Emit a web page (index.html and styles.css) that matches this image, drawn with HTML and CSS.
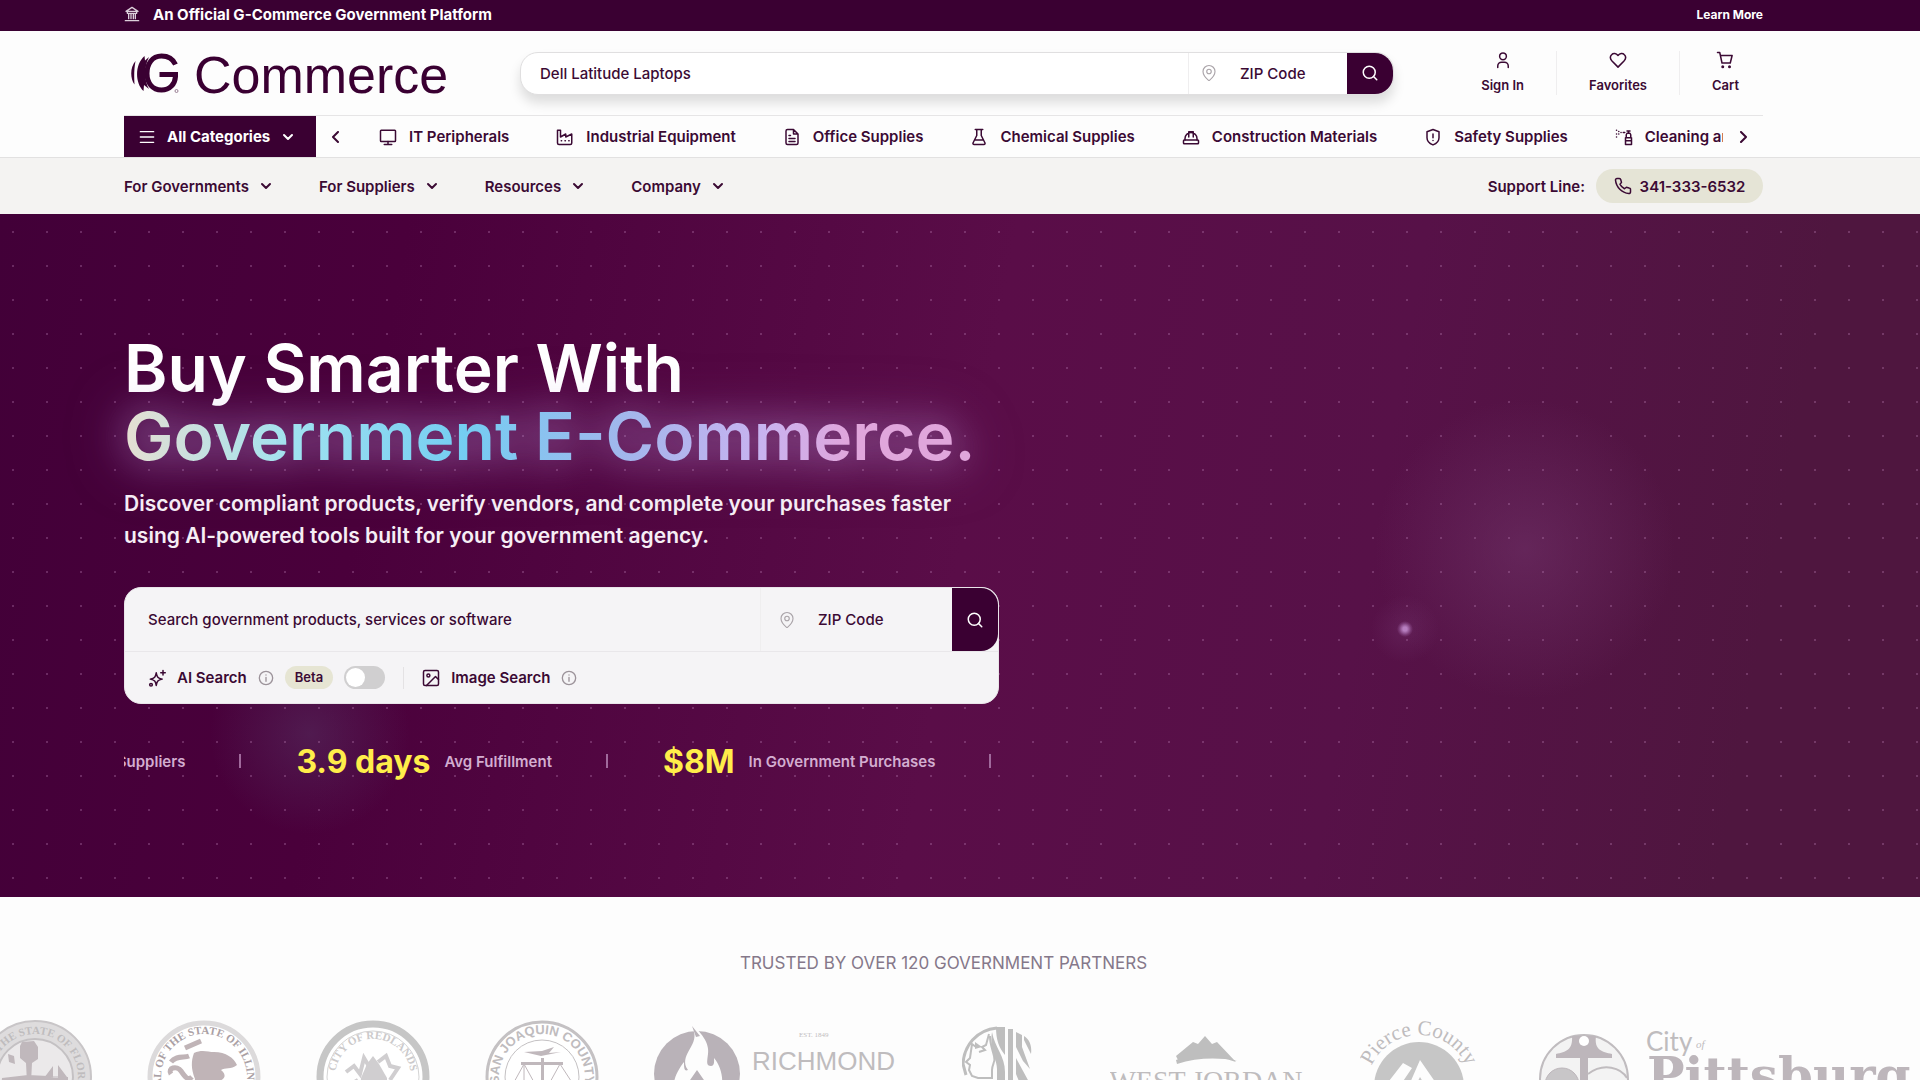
FILE: index.html
```html
<!DOCTYPE html>
<html lang="en">
<head>
<meta charset="utf-8">
<meta name="viewport" content="width=device-width, initial-scale=1">
<title>G Commerce</title>
<link rel="stylesheet" href="styles.css">
</head>
<body>
<svg class="sprite" aria-hidden="true">
  <symbol id="chevron-down" viewBox="0 0 12 12"><path d="M2 4l4 4 4-4"/></symbol>
  <symbol id="pin" viewBox="0 0 24 24"><path d="M20 10c0 5-5.500 10.200-7.400 11.800a1 1 0 0 1-1.200 0C9.500 20.200 4 15 4 10a8 8 0 0 1 16 0"/><circle cx="12" cy="10" r="3"/></symbol>
  <symbol id="search" viewBox="0 0 24 24"><circle cx="11" cy="11" r="8"/><path d="M21 21l-4.300-4.300"/></symbol>
  <symbol id="info" viewBox="0 0 24 24"><circle cx="12" cy="12" r="10"/><path d="M12 11v6M12 7.500h.010"/></symbol>
</svg>

<div class="topbar">
  <p class="official">
    <svg class="icon" viewBox="0 0 24 24"><path d="M3 8l9-6 9 6zM5 8v3h14V8M7 12v7M10.500 12v7M14 12v7M17 12v7M2 22h20"/></svg>
    An Official G-Commerce Government Platform
  </p>
  <a class="learn" href="#">Learn More</a>
</div>

<header class="header">
  <a class="logo" href="#" aria-label="G Commerce home">
    <svg class="logo-mark" viewBox="0 0 48 42">
      <path d="M44.500 12.500C42 7 36.500 4 30.500 4C21 4 16 12 16 21.500s5.500 16.500 14.500 16.500c8.500 0 13.500-6 14-13.500v-2H28.500" fill="none" stroke="currentColor" stroke-width="5"/>
      <path d="M18 5L14 8.500l-.500-4.500C4 12 3.500 31 12.500 39l.500-6 5 4C13 29 13 14 18 5zM4.500 9C-1 15-1 27 3.500 32.500C3 25 3 17 4.500 9z" fill="currentColor"/>
      <circle cx="45.500" cy="39" r="1.500" fill="none" stroke="#9a7f94"/>
    </svg>
    <span>Commerce</span>
  </a>
  <form class="search" role="search">
    <input class="search-query" type="text" placeholder="Dell Latitude Laptops" aria-label="Search products">
    <label class="zip"><svg class="icon"><use href="#pin"/></svg><input type="text" placeholder="ZIP Code" aria-label="ZIP Code"></label>
    <button class="search-go" type="button" aria-label="Search"><svg class="icon"><use href="#search"/></svg></button>
  </form>
  <nav class="account" aria-label="Account">
    <a href="#"><svg class="icon" viewBox="0 0 24 24"><circle cx="12" cy="7" r="4.500"/><path d="M5 22v-2a5 5 0 0 1 5-5h4a5 5 0 0 1 5 5v2"/></svg>Sign In</a>
    <a href="#"><svg class="icon" viewBox="0 0 24 24"><path d="M12 21.500l-8-8.200C1.500 10.500 1.500 7 3.500 5c2.300-2.500 6-2 8.500 1 2.500-3 6.200-3.500 8.500-1 2 2 2 5.500-.500 8.300z"/></svg>Favorites</a>
    <a href="#"><svg class="icon" viewBox="0 0 24 24"><path d="M2 2h3l3 14h11l2.500-10H6"/><circle cx="9" cy="21" r="1"/><circle cx="18" cy="21" r="1"/></svg>Cart</a>
  </nav>
</header>

<div class="categories">
  <button class="all-categories" type="button">
    <svg class="icon" viewBox="0 0 24 24"><path d="M2 4h20M2 12h20M2 20h20"/></svg>
    All Categories
    <svg class="chevron"><use href="#chevron-down"/></svg>
  </button>
  <button class="scroll" type="button" aria-label="Previous categories"><svg class="chevron" viewBox="0 0 12 12"><path d="M8 1L3 6l5 5"/></svg></button>
  <nav class="category-list" aria-label="Categories">
    <a href="#"><svg class="icon" viewBox="0 0 24 24"><rect x="2" y="3" width="20" height="15" rx="1"/><path d="M12 18v4M7 22h10"/></svg>IT Peripherals</a>
    <a href="#"><svg class="icon" viewBox="0 0 24 24"><path d="M2 20V3h4v9l7-4v4l8-4v12a2 2 0 0 1-2 2H4a2 2 0 0 1-2-2zM7 17h.500M12 17h.500M17 17h.500"/></svg>Industrial Equipment</a>
    <a href="#"><svg class="icon" viewBox="0 0 24 24"><path d="M14 2H6a2 2 0 0 0-2 2v16a2 2 0 0 0 2 2h12a2 2 0 0 0 2-2V8zM14 2v6h6M8 10h2M8 14h8M8 18h8"/></svg>Office Supplies</a>
    <a href="#"><svg class="icon" viewBox="0 0 24 24"><path d="M7 2h10M9 2v8L4 20a1.500 1.500 0 0 0 1.400 2h13.200A1.500 1.500 0 0 0 20 20l-5-10V2M6.500 16h11"/></svg>Chemical Supplies</a>
    <a href="#"><svg class="icon" viewBox="0 0 24 24"><rect x="2" y="16" width="20" height="5" rx="1"/><path d="M4 16v-2a8 8 0 0 1 16 0v2M9 12V5h6v7"/></svg>Construction Materials</a>
    <a href="#"><svg class="icon" viewBox="0 0 24 24"><path d="M12 2l8 3v8c0 5-4 8-8 9.500C8 21 4 18 4 13V5zM12 8v5M12 16.500v.100"/></svg>Safety Supplies</a>
    <a href="#"><svg class="icon" viewBox="0 0 24 24"><path d="M14 13h8v9h-8zM15 13V9l1-2h4l1 2v4M18 7V4M16 4h4M14 17h8M2 3h.100M5 4.500h.100M8 6h.100M2 8h.100M5 8h.100M2 12h.100M11 6h2"/></svg>Cleaning and Janitorial</a>
  </nav>
  <button class="scroll" type="button" aria-label="More categories"><svg class="chevron" viewBox="0 0 12 12"><path d="M4 1l5 5-5 5"/></svg></button>
</div>

<div class="subnav">
  <nav class="menus" aria-label="Main">
    <a href="#">For Governments <svg class="chevron"><use href="#chevron-down"/></svg></a>
    <a href="#">For Suppliers <svg class="chevron"><use href="#chevron-down"/></svg></a>
    <a href="#">Resources <svg class="chevron"><use href="#chevron-down"/></svg></a>
    <a href="#">Company <svg class="chevron"><use href="#chevron-down"/></svg></a>
  </nav>
  <span>Support Line:</span>
  <a class="phone" href="tel:3413336532"><svg class="icon" viewBox="0 0 24 24"><path d="M22 17v3a2 2 0 0 1-2.200 2A19.800 19.800 0 0 1 2 4.200 2 2 0 0 1 4 2h3a2 2 0 0 1 2 1.700l1 3.500-2 2.500a16 16 0 0 0 6 6l2.500-2 3.500 1A2 2 0 0 1 22 17z"/></svg>341-333-6532</a>
</div>

<main>
  <section class="hero">
    <h1>Buy Smarter With<br><span class="accent">Government E-Commerce.</span></h1>
    <p class="lead">Discover compliant products, verify vendors, and complete your purchases faster using AI-powered tools built for your government agency.</p>
    <form class="finder">
      <div class="finder-row">
        <input class="search-query" type="text" placeholder="Search government products, services or software" aria-label="Search government products">
        <label class="zip"><svg class="icon"><use href="#pin"/></svg><input type="text" placeholder="ZIP Code" aria-label="ZIP Code"></label>
        <button class="search-go" type="button" aria-label="Search"><svg class="icon"><use href="#search"/></svg></button>
      </div>
      <div class="finder-options">
        <svg class="icon" viewBox="0 0 24 24"><path d="M11 5c1 6 2 7 8 8.500-6 1.500-7 2.500-8 8.500-1-6-2-7-8-8.500C9 12 10 11 11 5zM20 2v6M17 5h6"/><circle cx="4" cy="21" r="1.800"/></svg>
        <label for="ai">AI Search</label>
        <svg class="icon info"><use href="#info"/></svg>
        <span class="beta">Beta</span>
        <input class="toggle" id="ai" type="checkbox">
        <span class="rule"></span>
        <svg class="icon" viewBox="0 0 24 24"><rect x="2" y="2" width="20" height="20" rx="2"/><circle cx="8.500" cy="8.500" r="2"/><path d="M22 14l-4-4L6 22"/></svg>
        <a href="#">Image Search</a>
        <svg class="icon info"><use href="#info"/></svg>
      </div>
    </form>
    <div class="stats">
      <div class="stats-track">
        <p>Verified Suppliers</p>
        <p><strong>3.9 days</strong>Avg Fulfillment</p>
        <p><strong>$8M</strong>In Government Purchases</p>
        <p></p>
      </div>
    </div>
  </section>

  <section class="partners">
    <h2>TRUSTED BY OVER 120 GOVERNMENT PARTNERS</h2>
    <div class="partner-track">
      <svg class="seal" viewBox="0 0 114 114">
        <circle cx="57" cy="57" r="56" fill="#dedcdd" stroke="#c8c5c7" stroke-width="2"/><circle cx="57" cy="57" r="38" fill="#ebe9ea" stroke="#c4c1c3" stroke-width="2"/>
        <path id="ring" d="M57 100a43 43 0 0 1 0-86a43 43 0 0 1 0 86" fill="none"/>
        <text class="seal-serif"><textPath href="#ring" startOffset="50%">SEAL OF THE STATE OF FLORIDA</textPath></text>
        <path d="M44 22l12-1 4 6v12l-6 4-1 20h-4l-1-20-6-5V26zM24 58l26-3 40 2v20H22zM30 34l6 2 1 8-6-2zM66 58l9-12v12h5V45l9 12z" fill="#c0b8bc"/>
      </svg>
      <svg class="seal" viewBox="0 0 114 114">
        <circle cx="57" cy="57" r="54" fill="#fff" stroke="#dcdadb" stroke-width="5"/>
        <text class="seal-serif dark"><textPath href="#ring" startOffset="50%">SEAL OF THE STATE OF ILLINOIS</textPath></text>
        <path d="M47 33c8-4 14-1 20-1 12 0 20 6 23 13-6 5-12 2-16 5 6 5 4 9-2 11-5 1-8 8-12 14-6 4-12 2-14-4l2-12c-4-10-4-18-1-26z" fill="#c0b4b7"/>
        <path d="M38 28l16-7M24 42c5-7 13-4 18-6M24 54c-4-6 6-9 10-3s7 10 11 6M24 66c6-4 12 8 20 8" fill="none" stroke="#c0b4b7" stroke-width="5"/>
      </svg>
      <svg class="seal" viewBox="0 0 114 114">
        <circle cx="57" cy="57" r="53" fill="#fff" stroke="#c6c6c6" stroke-width="7"/><circle cx="57" cy="57" r="46" fill="none" stroke="#d4d4d4"/>
        <path id="ring-inner" d="M57 95a38 38 0 0 1 0-76a38 38 0 0 1 0 76" fill="none"/>
        <text class="seal-serif light"><textPath href="#ring-inner" startOffset="50%">CITY OF REDLANDS</textPath></text>
        <path d="M45 58l6-14 6-8 6 8 8 14v24H43z" fill="#d0ced0"/><path d="M30 52l8-6 6 8 4-16 6 10M62 42l8-6 4 10 8 2-8 12M32 66l10-6M72 62l12 4" fill="none" stroke="#d0ced0" stroke-width="4"/>
      </svg>
      <svg class="seal" viewBox="0 0 114 114">
        <circle cx="57" cy="57" r="55" fill="#fff" stroke="#c4c1c3" stroke-width="3"/><circle cx="57" cy="57" r="37" fill="none" stroke="#c4c1c3"/>
        <text class="seal-sans"><textPath href="#ring" startOffset="50%">SAN JOAQUIN COUNTY</textPath></text>
        <path d="M39 32l18-1 12-4-5 6 12-1-20 4zM36 42h42v3H36zM56 38h3v35h-3z" fill="#c0b8bc"/><path d="M39 44L28 64M39 44v20M39 44l11 20M75 44L64 64M75 44l13 20" fill="none" stroke="#c0b8bc"/><path d="M22 62h26v12H22zM62 60l26 2v12H60z" fill="#d0cccf"/>
      </svg>
      <svg class="wide" viewBox="0 0 253 114">
        <circle cx="43" cy="54" r="43" fill="#b9b2b8"/><path d="M38 5c8 6 18 18 16 29-1 8-2 12 3 12 4 0 3-6 3-8 10 12 12 32 0 46H25C13 66 24 50 30 42c0 5 0 10 4 8-10-14 10-24 6-38z" fill="#fdfdfd"/><path d="M38 6l8 10-4 1zM43 50l9 13v20H34V63z" fill="#b9b2b8"/>
        <text class="est" x="145" y="17">EST. 1849</text>
        <text class="richmond" x="98" y="50">RICHMOND</text>
      </svg>
      <svg class="face" viewBox="0 0 93 114">
        <path d="M35 8C14 10 2 26 1 44l3 11" fill="none" stroke="#bebebe" stroke-width="3"/><path d="M27 14l-3 11-4 2 3 3-6 2M14 27l-4-3-2 14-4 4 4 3-1 5 3 6 6 2h14V50c0-6 4-8 2-14-2-8-4-12-4-20" fill="none" stroke="#bebebe" stroke-width="2"/><path d="M13 22l7 5-7 2z" fill="#bebebe"/>
        <path d="M30 12c3 16 13 24 13 40v36h-8V49c0-10-8-18-5-37zM34 7h9v28C37 28 34 20 34 7zM46 9h5v80h-5zM54 12l6 3v12l8 22-7-8-7-14zM62 16c6 4 8 10 7 18l-7-14zM54 38l13 24-4 14-9-22zM54 64l6 14-6 8z" fill="#bebebe"/>
      </svg>
      <svg class="jordan" viewBox="0 0 195 114">
        <path d="M66 36l17-14 5 2 7-8 7 8 5-2 19 20c-20-7-42-6-57 0zM66 40c20-7 43-7 61 1-20-4-41-3-60 3z" fill="#bebebe"/>
        <text x="96" y="70">WEST JORDAN</text>
      </svg>
      <svg class="pierce" viewBox="0 0 116 114">
        <path id="arch" d="M7 67a52 52 0 0 1 104 0" fill="none"/><text><textPath href="#arch" startOffset="50%">Pierce County</textPath></text>
        <circle cx="59" cy="67" r="45" fill="#c6c6c6"/><path d="M15 79l28-36 9 5L31 79zM43 79l17-39 27 39H73L60 57 49 79z" fill="#fdfdfd"/>
      </svg>
      <svg class="pittsburg" viewBox="0 0 380 114">
        <circle cx="53" cy="59" r="44" fill="#f3f3f3" stroke="#c0bcbf" stroke-width="2"/><path d="M41 16h24c-2 14 6 16 16 18v4H25v-4c10-2 17-4 16-18zM49 36h8v54h-8z" fill="#bdb6bb"/><circle cx="53" cy="21" r="5" fill="#fff"/><circle cx="31" cy="65" r="17" fill="#c8c6c8" stroke="#bdb6bb"/><path d="M57 54c16-12 33-6 39 4" fill="none" stroke="#c0bcbf" stroke-width="2"/>
        <text class="city" x="115" y="31">City</text><text class="of" x="165" y="28">of</text><text class="burg" x="116" y="73">Pittsburg</text>
      </svg>
    </div>
  </section>
</main>
</body>
</html>
```
FILE: styles.css
```css
:root {
  --plum: #3a0032;
  --ink: #3b0a34;
  --gutter-left: 124px;
  --gutter-right: 157px;
}

* { box-sizing: border-box; }

body {
  margin: 0;
  overflow-x: hidden;
  background: #fdfdfd;
  color: var(--ink);
  font-family: Inter, "Liberation Sans", sans-serif;
  font-size: 15px;
  font-weight: 600;
}

a { color: inherit; text-decoration: none; }
p, h1, h2 { margin: 0; }
button, input { font: inherit; color: inherit; border: 0; padding: 0; background: none; }
svg { display: block; flex: none; }
input::placeholder { color: var(--ink); opacity: 1; }

.sprite { position: absolute; width: 0; height: 0; }

.icon, .chevron {
  width: 18px;
  height: 18px;
  fill: none;
  stroke: currentColor;
  stroke-width: 2;
  stroke-linecap: round;
  stroke-linejoin: round;
}
.chevron { width: 12px; height: 12px; }

.topbar, .header, .subnav, .hero {
  padding-left: var(--gutter-left);
  padding-right: var(--gutter-right);
}

/* Announcement strip */
.topbar {
  display: flex;
  justify-content: space-between;
  align-items: center;
  height: 31px;
  padding-bottom: 3px;
  background: var(--plum);
  color: #fff;
  font-weight: 700;
}
.official { display: flex; align-items: center; gap: 13px; }
.official .icon { width: 16px; height: 16px; stroke-width: 2; color: #dccfda; }
.learn { font-size: 12px; }

/* Header */
.header {
  display: grid;
  grid-template-columns: 396px minmax(0, 874px) 1fr;
  align-items: center;
  height: 84px;
}
.logo {
  display: flex;
  align-items: center;
  gap: 15px;
  padding-left: 7px;
  color: var(--plum);
  font: 52px/56px "Liberation Sans", sans-serif;
}
.logo span { padding-top: 3px; }
.logo-mark { width: 48px; height: 42px; }

.search {
  display: flex;
  height: 43px;
  border: 1px solid #e0dfe0;
  border-radius: 18px;
  background: #fff;
  box-shadow: 0 8px 12px rgba(0, 0, 0, .13);
}
.search-query { flex: 1; min-width: 0; padding-left: 19px; outline: 0; font-weight: 500; }
.zip {
  display: flex;
  align-items: center;
  gap: 22px;
  width: 159px;
  padding-left: 11px;
  border-left: 1px solid #efeeef;
}
.zip input { width: 90px; font-weight: 500; }
.zip .icon { color: #a9a3a8; stroke-width: 1.500; }
.search-go {
  display: grid;
  place-items: center;
  width: 46px;
  border-radius: 0 18px 18px 0;
  background: var(--plum);
  color: #fff;
}

.account { display: flex; justify-content: flex-end; font-size: 13px; }
.account a {
  display: flex;
  flex-direction: column;
  align-items: center;
  gap: 6px;
  padding: 0 32px;
  border-left: 1px solid #efeeef;
  line-height: 20px;
}
.account a:first-child { border-left: 0; }
.account a:last-child { padding-right: 24px; }

/* Category strip */
.categories {
  display: flex;
  align-items: center;
  height: 42px;
  margin-left: var(--gutter-left);
  margin-right: var(--gutter-right);
  border-top: 1px solid #e6e5e6;
}
.all-categories {
  display: flex;
  align-items: center;
  gap: 12px;
  width: 192px;
  height: 41px;
  padding-left: 15px;
  background: var(--plum);
  color: #fff;
  font-weight: 700;
}
.all-categories .icon { width: 16px; height: 16px; }
.scroll { display: grid; place-items: center; width: 40px; }
.category-list { display: flex; flex: 1; gap: 47px; min-width: 0; padding-left: 23px; overflow: hidden; }
.category-list a { display: flex; align-items: center; gap: 12px; white-space: nowrap; line-height: 20px; }

/* Secondary navigation */
.subnav {
  display: flex;
  align-items: center;
  gap: 11px;
  height: 57px;
  border-top: 1px solid #e2e1e1;
  background: #f4f3f2;
}
.menus { display: flex; flex: 1; gap: 47px; }
.menus a { display: flex; align-items: center; gap: 11px; }
.phone {
  display: flex;
  align-items: center;
  justify-content: center;
  gap: 8px;
  width: 167px;
  height: 34px;
  border-radius: 17px;
  background: #e5e4d6;
}

/* Hero */
.hero {
  height: 683px;
  padding-top: 120px;
  color: #f6eef5;
  background:
    radial-gradient(circle at 1405px 415px, #b77fc0 2px, rgba(170, 110, 180, .300) 6px, transparent 8px),
    radial-gradient(circle at 1405px 415px, rgba(130, 70, 130, .250), transparent 34px),
    radial-gradient(circle, rgba(190, 130, 185, .320) 1px, transparent 1px) 98px 1px / 34px 34px,
    radial-gradient(circle at 1525px 335px, rgba(120, 60, 115, .450), transparent 150px),
    radial-gradient(circle at 310px 520px, rgba(90, 65, 110, .400), transparent 100px),
    linear-gradient(100deg, #420038 0%, #4a003b 20%, #5a0d48 50%, #571148 70%, #4f163f 90%);
}
.hero h1 {
  color: #fff;
  font-size: 66px;
  line-height: 68px;
  font-weight: 600;
}
.accent {
  color: transparent;
  background: linear-gradient(90deg, #e6dfd2 0%, #9fe2f0 20%, #74cdf2 40%, #a5b5ec 60%, #c8b3f0 75%, #e0a6dc 85%);
  -webkit-background-clip: text;
  background-clip: text;
  filter: drop-shadow(0 0 18px rgba(190, 150, 225, .450)) drop-shadow(0 0 26px rgba(190, 150, 225, .500));
}
.lead {
  max-width: 874px;
  margin-top: 18px;
  font-size: 21px;
  line-height: 32px;
  font-weight: 600;
}
.finder {
  max-width: 875px;
  margin-top: 35px;
  border: 1px solid #e9e4e9;
  border-radius: 17px;
  background: #f5f4f6;
  color: var(--ink);
}
.finder-row { display: flex; height: 64px; border-bottom: 1px solid #e9e7ea; }
.finder-row .search-query { padding-left: 23px; }
.finder-row .zip { width: 192px; padding-left: 17px; }
.finder-row .search-go { border-radius: 0 17px 17px 0; }
.finder-options {
  display: flex;
  align-items: center;
  gap: 11px;
  height: 51px;
  padding-left: 23px;
}
.finder-options .info { width: 16px; height: 16px; stroke-width: 2; color: #9c939a; }
.beta {
  padding: 0 10px;
  border-radius: 12px;
  background: #e6e5d3;
  font-size: 13px;
  line-height: 23px;
}
.toggle {
  appearance: none;
  display: flex;
  width: 41px;
  height: 23px;
  margin: 0;
  padding: 2px;
  border-radius: 12px;
  background: #d0cfd0;
}
.toggle::before { content: ""; width: 19px; height: 19px; border-radius: 50%; background: #fff; }
.rule { width: 1px; height: 22px; margin: 0 7px; background: #e4e2e4; }

.stats { max-width: 875px; margin-top: 33px; overflow: hidden; }
.stats-track { display: flex; width: max-content; margin-left: -68px; }
.stats p {
  display: flex;
  align-items: center;
  gap: 14px;
  height: 48px;
  color: #d3add0;
}
.stats p + p::before { content: ""; width: 2px; height: 14px; margin: 0 41px 0 54px; background: #a06a9c; }
.stats strong { color: #ffed4a; font-size: 32px; font-weight: 700; }

/* Partners */
.partners { overflow: hidden; padding-top: 56px; padding-bottom: 40px; }
.partners h2 {
  margin-left: var(--gutter-left);
  margin-right: var(--gutter-right);
  color: #85788a;
  font-size: 17px;
  line-height: 20px;
  font-weight: 400;
  text-align: center;
}
.partner-track { display: flex; gap: 55px; width: max-content; margin: 47px 0 0 -22px; }
.partner-track svg { height: 114px; }
.seal { width: 114px; }
.wide { width: 253px; }
.face { width: 93px; }
.jordan { width: 195px; }
.pierce { width: 116px; }
.pittsburg { width: 380px; }
.partner-track text { fill: #bfbcbe; }
.seal text { text-anchor: middle; }
.seal-serif { font: bold 11px "Liberation Serif", serif; }
.partner-track .dark { fill: #aaa0a4; }
.partner-track .light { fill: #cccacb; }
.seal-sans { font: bold 13px "Liberation Sans", sans-serif; }
.est { font: 7px "Liberation Serif", serif; }
.richmond { font: 26px "Liberation Sans Narrow", "Liberation Sans", sans-serif; }
.jordan text { font: 28px "Liberation Serif", serif; text-anchor: middle; }
.pierce text { font: 21px "Liberation Serif", serif; text-anchor: middle; }
.partner-track .city { font: 26px Lato, sans-serif; }
.partner-track .of { font: italic 11px "Liberation Serif", serif; }
.partner-track .burg { font: bold 50px "DejaVu Serif", serif; fill: #bdb6bb; }
```
